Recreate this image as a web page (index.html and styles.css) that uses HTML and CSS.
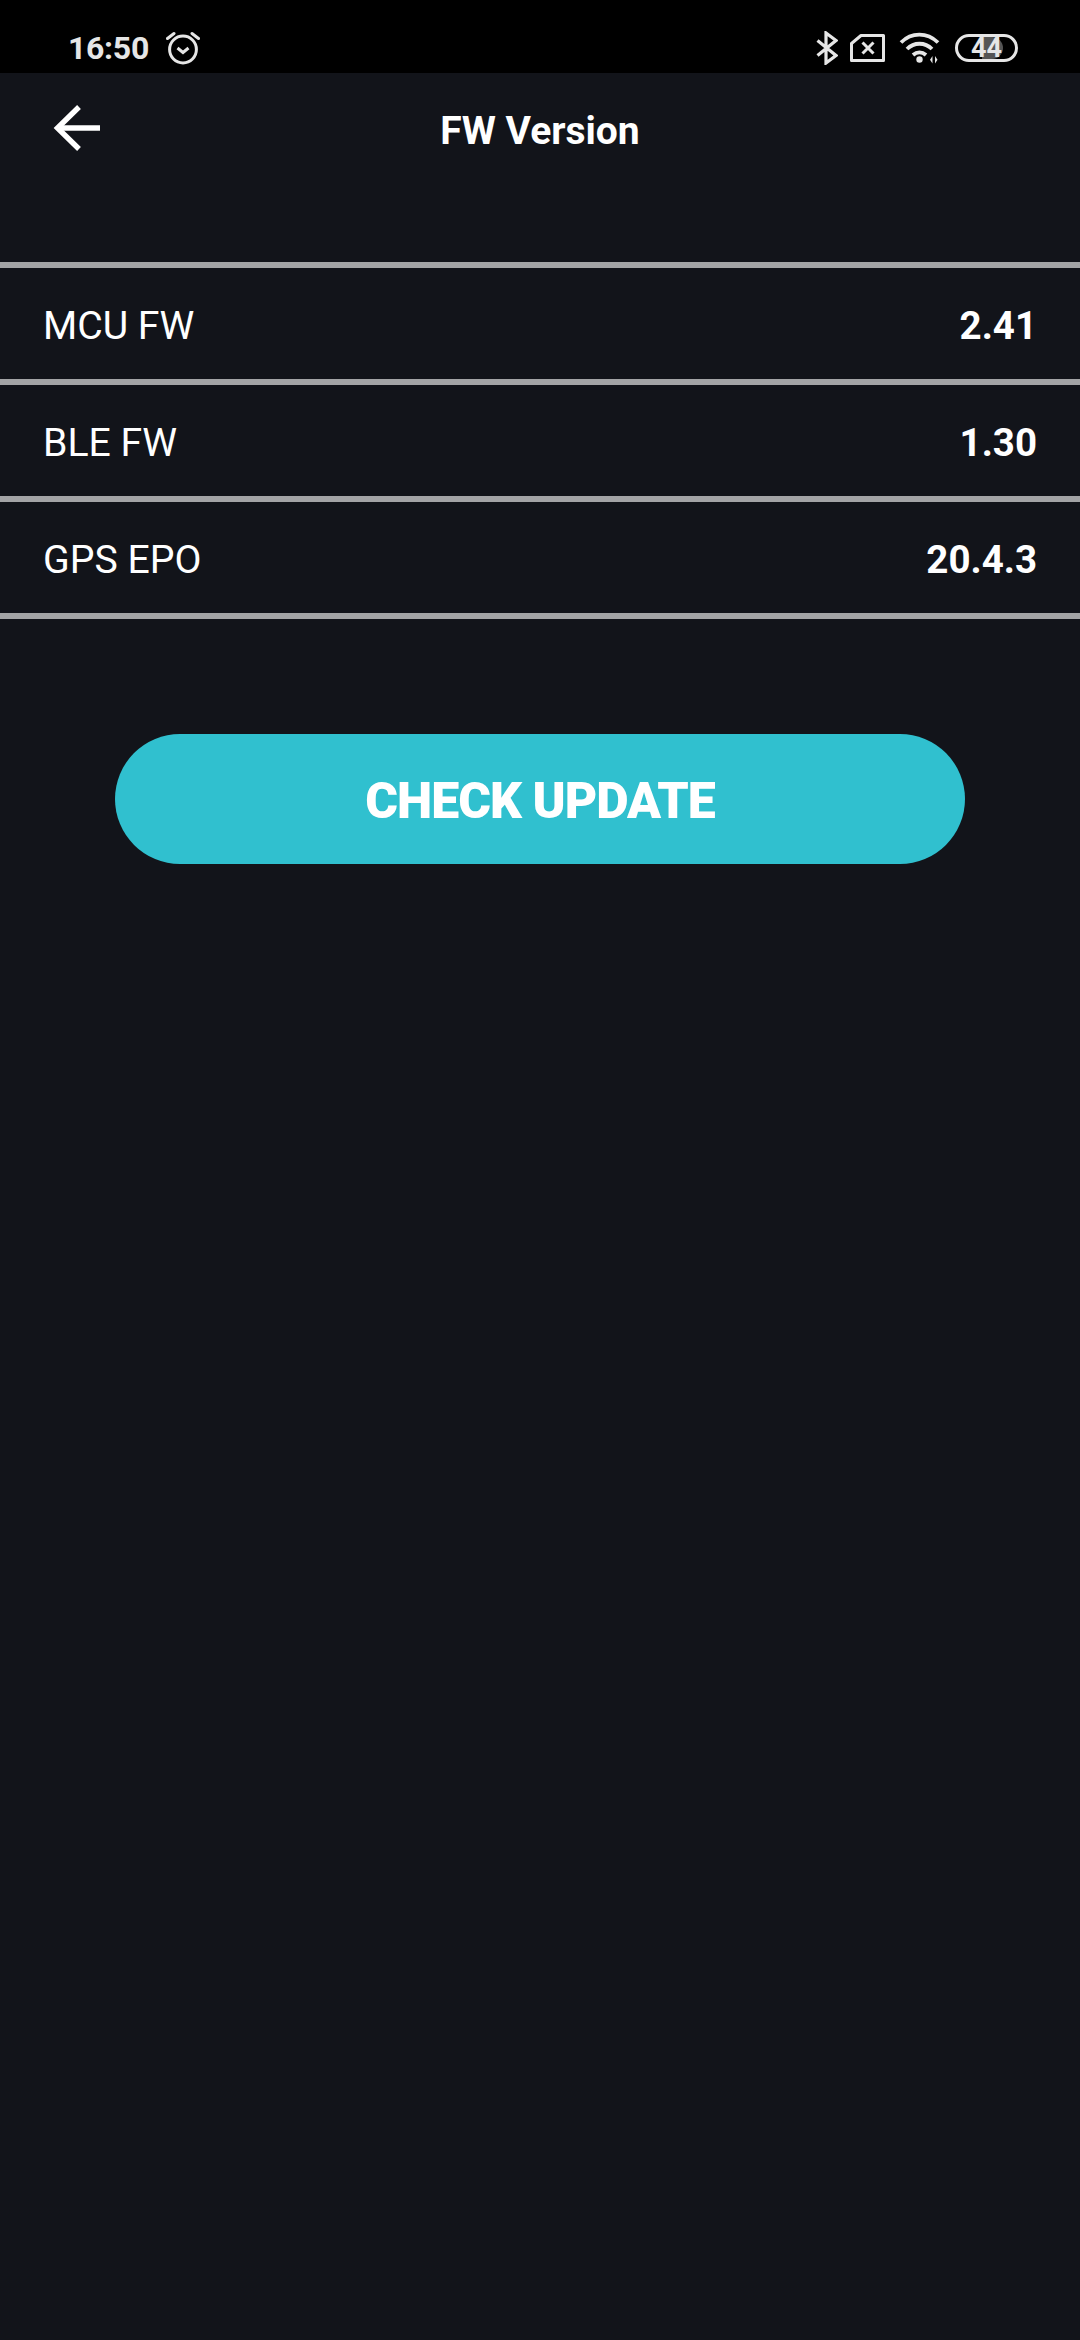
FILE: index.html
```html
<!DOCTYPE html>
<html lang="en">
<head>
    <meta charset="UTF-8">
    <title>FW Version</title>
    <link rel="stylesheet" href="styles.css">
</head>
<body>

<div class="status-bar">
    <div class="status-left">
        <span class="time">16:50</span>
        <svg class="alarm" width="34" height="34" viewBox="0 0 34 34" fill="none" stroke="#e6e6e6" stroke-width="3">
            <circle cx="17" cy="18.5" r="13.4"/>
            <path d="M11.5 17l5.5 4.5 5.5-4.5"/>
            <path d="M1.5 7.5L8 2.5M32.5 7.5L26 2.5" stroke-linecap="round"/>
        </svg>
    </div>
    <div class="status-right">
        <svg class="bt" width="22" height="34" viewBox="0 0 22 34" fill="none" stroke="#e6e6e6" stroke-width="3.2">
            <path d="M1.5 9.5L20 24.5 10 32V2L20 9.5 1.5 24.5"/>
        </svg>
        <svg class="sim" width="35" height="28" viewBox="0 0 35 28" fill="none" stroke="#e6e6e6" stroke-width="3" stroke-linejoin="round">
            <path d="M11 1.5H33.5V26.5H1.5V9.5Z"/>
            <path d="M12.5 8.5L23.5 19.5M23.5 8.5L12.5 19.5"/>
        </svg>
        <svg class="wifi" width="42" height="32" viewBox="0 0 42 32" fill="none" stroke="#e6e6e6" stroke-width="3.8">
            <path d="M2 10.5C12.5 0 28 0 39 10.5"/>
            <path d="M8 17C15 10 26 10 33 17"/>
            <path d="M14 23C18 19.5 23 19.5 27 23"/>
            <circle cx="20.5" cy="27.5" r="3.2" fill="#e6e6e6" stroke="none"/>
            <path d="M33.5 24V31.5L31 27.8ZM36 24V31.5L38.5 27.8Z" fill="#e6e6e6" stroke="none"/>
        </svg>
        <div class="battery">
            <div class="battery-fill"></div>
            <span class="battery-text">44</span>
        </div>
    </div>
</div>

<div class="header">
    <svg class="back" width="48" height="48" viewBox="0 0 48 48" fill="none" stroke="#fff" stroke-width="5.4">
        <path d="M47 24H5"/>
        <path d="M26 3L4.5 24 26 45"/>
    </svg>
    <div class="title">FW Version</div>
</div>

<div class="list">
    <div class="row">
        <span class="label">MCU FW</span>
        <span class="value">2.41</span>
    </div>
    <div class="row">
        <span class="label">BLE FW</span>
        <span class="value">1.30</span>
    </div>
    <div class="row">
        <span class="label">GPS EPO</span>
        <span class="value">20.4.3</span>
    </div>
</div>

<div class="actions">
    <button class="check-btn">CHECK UPDATE</button>
</div>

</body>
</html>
```

FILE: styles.css
```css
body {
    margin: 0;
    padding: 0;
    height: 2340px;
    overflow: hidden;
    background-color: #12141a;
    color: #fff;
    font-family: Roboto, "Liberation Sans", sans-serif;
}

.status-bar {
    height: 73px;
    box-sizing: border-box;
    background-color: #000;
    display: flex;
    justify-content: space-between;
    align-items: center;
    padding: 22px 62px 0 68px;
    color: #e6e6e6;
}

.status-left,
.status-right {
    display: flex;
    align-items: center;
}

.status-left {
    gap: 17px;
}

.status-right {
    gap: 14px;
}

.time {
    font-size: 32px;
    font-weight: 700;
    letter-spacing: -0.3px;
}

.bt {
    margin-right: -2px;
}

.battery {
    position: relative;
    box-sizing: border-box;
    width: 63px;
    height: 28px;
    border: 3px solid #e6e6e6;
    border-radius: 14px;
    display: flex;
    align-items: center;
    justify-content: center;
}

.battery-fill {
    position: absolute;
    left: 24px;
    top: 0;
    bottom: 0;
    width: 21px;
    border-radius: 0 11px 11px 0;
    background-color: #555;
}

.battery-text {
    position: relative;
    font-size: 27px;
    font-weight: 700;
    line-height: 30px;
}

.header {
    height: 189px;
    position: relative;
    box-sizing: border-box;
    padding-top: 32px;
    display: flex;
    align-items: flex-start;
    justify-content: center;
}

.back {
    position: absolute;
    left: 53px;
    top: 31px;
}

.title {
    font-size: 39px;
    font-weight: 700;
    line-height: 52px;
}

.list {
    border-bottom: 6px solid #a3a4a6;
}

.row {
    height: 111px;
    border-top: 6px solid #a3a4a6;
    display: flex;
    justify-content: space-between;
    align-items: center;
    padding: 0 43px;
}

.label {
    font-size: 39.2px;
    padding-top: 4px;
}

.value {
    font-size: 38.5px;
    font-weight: 700;
    padding-top: 3px;
}

.actions {
    display: flex;
    justify-content: center;
    padding-top: 115px;
}

.check-btn {
    width: 850px;
    height: 130px;
    border: none;
    border-radius: 65px;
    background-color: #30c0cf;
    color: #fff;
    font-family: Roboto, "Liberation Sans", sans-serif;
    font-size: 50px;
    font-weight: 900;
    letter-spacing: -1px;
    padding: 4px 0 0;
}
```
